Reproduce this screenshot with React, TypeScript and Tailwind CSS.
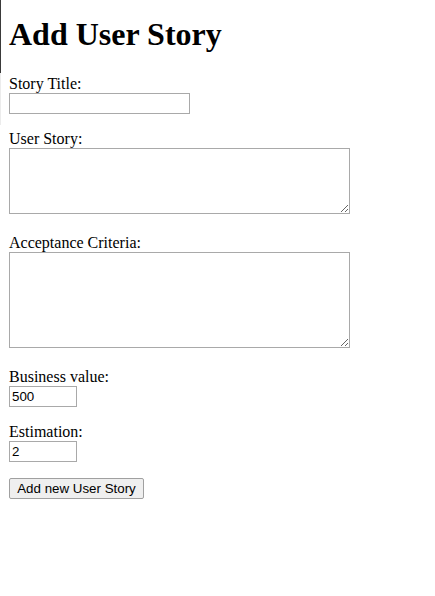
import React from "react";

const serif = "font-['Liberation_Serif',serif]";
const sans = "font-['Liberation_Sans',Arial,sans-serif]";

function Field({
  label,
  className,
  children,
}: {
  label: string;
  className?: string;
  children: React.ReactNode;
}) {
  return (
    <div className={className}>
      <label className="block h-[19px] pt-px text-[16px] leading-[18px]">{label}</label>
      <div className="flex">{children}</div>
    </div>
  );
}

export default function App() {
  return (
    <div className={`relative min-h-[596px] bg-white pl-[9px] text-black ${serif}`}>
      <div className="absolute left-0 top-0 h-[73px] w-px bg-[#3a3a3a]" />
      <div className="absolute left-0 top-[73px] h-[52px] w-px bg-[#ececec]" />

      <h1 className="mt-0 pt-[16px] pb-[21px] text-[32px] font-bold leading-[37px]">
        Add User Story
      </h1>

      <form className="flex flex-col items-start">
        <Field label="Story Title:">
          <input
            type="text"
            className={`h-[21px] w-[181px] border border-[#a9a9a9] px-[2px] text-[13.33px] ${sans}`}
          />
        </Field>

        <Field label="User Story:" className="mt-[15px]">
          <textarea
            className={`h-[66px] w-[341px] border border-[#a9a9a9] px-[2px] text-[13.33px] ${sans}`}
          />
        </Field>

        <Field label="Acceptance Criteria:" className="mt-[19px]">
          <textarea
            className={`h-[96px] w-[341px] border border-[#a9a9a9] px-[2px] text-[13.33px] ${sans}`}
          />
        </Field>

        <Field label="Business value:" className="mt-[19px]">
          <input
            type="text"
            defaultValue="500"
            className={`h-[21px] w-[68px] border border-[#a9a9a9] px-[2px] text-[13.33px] ${sans}`}
          />
        </Field>

        <Field label="Estimation:" className="mt-[15px]">
          <input
            type="text"
            defaultValue="2"
            className={`h-[21px] w-[68px] border border-[#a9a9a9] px-[2px] text-[13.33px] ${sans}`}
          />
        </Field>

        <button
          type="button"
          className={`mt-[16px] h-[21px] w-[135px] rounded-[2px] border border-[#a0a0a0] bg-[#efefef] text-[13.33px] leading-none ${sans}`}
        >
          Add new User Story
        </button>
      </form>
    </div>
  );
}
